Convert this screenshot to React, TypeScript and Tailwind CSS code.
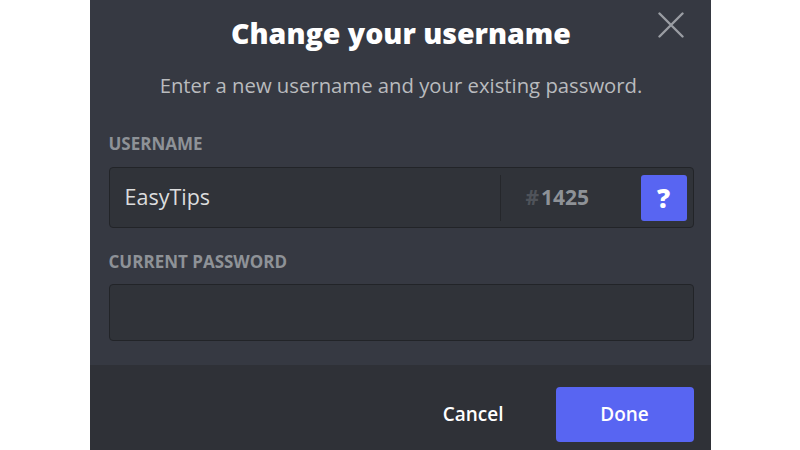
import React from "react";

export default function App() {
  return (
    <div
      className="w-full h-[450px] bg-white flex justify-center overflow-hidden"
      style={{ fontFamily: '"Open Sans", "Noto Sans", sans-serif' }}
    >
      <div className="w-[621px] h-full flex flex-col bg-[#363942]">
        <div className="relative h-[365px] pl-[19px] pr-[17px] pt-[16px]">
          <button className="absolute top-[12px] right-[27px] w-[26px] h-[26px] flex items-center justify-center text-[#9a9da3]">
            <svg width="26" height="26" viewBox="0 0 26 26" fill="none">
              <path d="M1.5 1.5L24.5 24.5M24.5 1.5L1.5 24.5" stroke="currentColor" strokeWidth="2.4" strokeLinecap="round" />
            </svg>
          </button>
          <h2 className="text-center text-white font-extrabold text-[28.5px] leading-[35px]">
            Change your username
          </h2>
          <p className="mt-[21px] text-center text-[#b9bbbe] text-[20.3px] leading-[26px]">
            Enter a new username and your existing password.
          </p>
          <div className="mt-[35px] text-[#8e9297] font-bold text-[17px] leading-[21px]">
            USERNAME
          </div>
          <div className="mt-[13px] h-[61px] rounded-[4px] bg-[#303339] border border-[#222428] flex items-center pl-[15px] pr-[6px]">
            <span className="flex-1 text-[#dcddde] text-[21.5px]">EasyTips</span>
            <div className="w-px h-[46px] bg-[#25272b]" />
            <div className="w-[140px] pl-[25px] flex items-center text-[21px] font-bold">
              <span className="text-[#4f535a]">#</span>
              <span className="ml-[2px] text-[#8e9297]">1425</span>
            </div>
            <button className="w-[46px] h-[46px] rounded-[3px] bg-[#5865f2] flex items-center justify-center text-white font-extrabold text-[26px] leading-none">
              ?
            </button>
          </div>
          <div className="mt-[23px] text-[#8e9297] font-bold text-[17px] leading-[21px]">
            CURRENT PASSWORD
          </div>
          <div className="mt-[12px] h-[57px] rounded-[4px] bg-[#303339] border border-[#222428]" />
        </div>
        <div className="flex-1 bg-[#2f3137] flex items-start justify-end pr-[17px] pt-[22px]">
          <button className="h-[55px] mr-[52px] text-white font-semibold text-[19px]">Cancel</button>
          <button className="w-[138px] h-[55px] rounded-[4px] bg-[#5865f2] text-white font-semibold text-[19px]">
            Done
          </button>
        </div>
      </div>
    </div>
  );
}
